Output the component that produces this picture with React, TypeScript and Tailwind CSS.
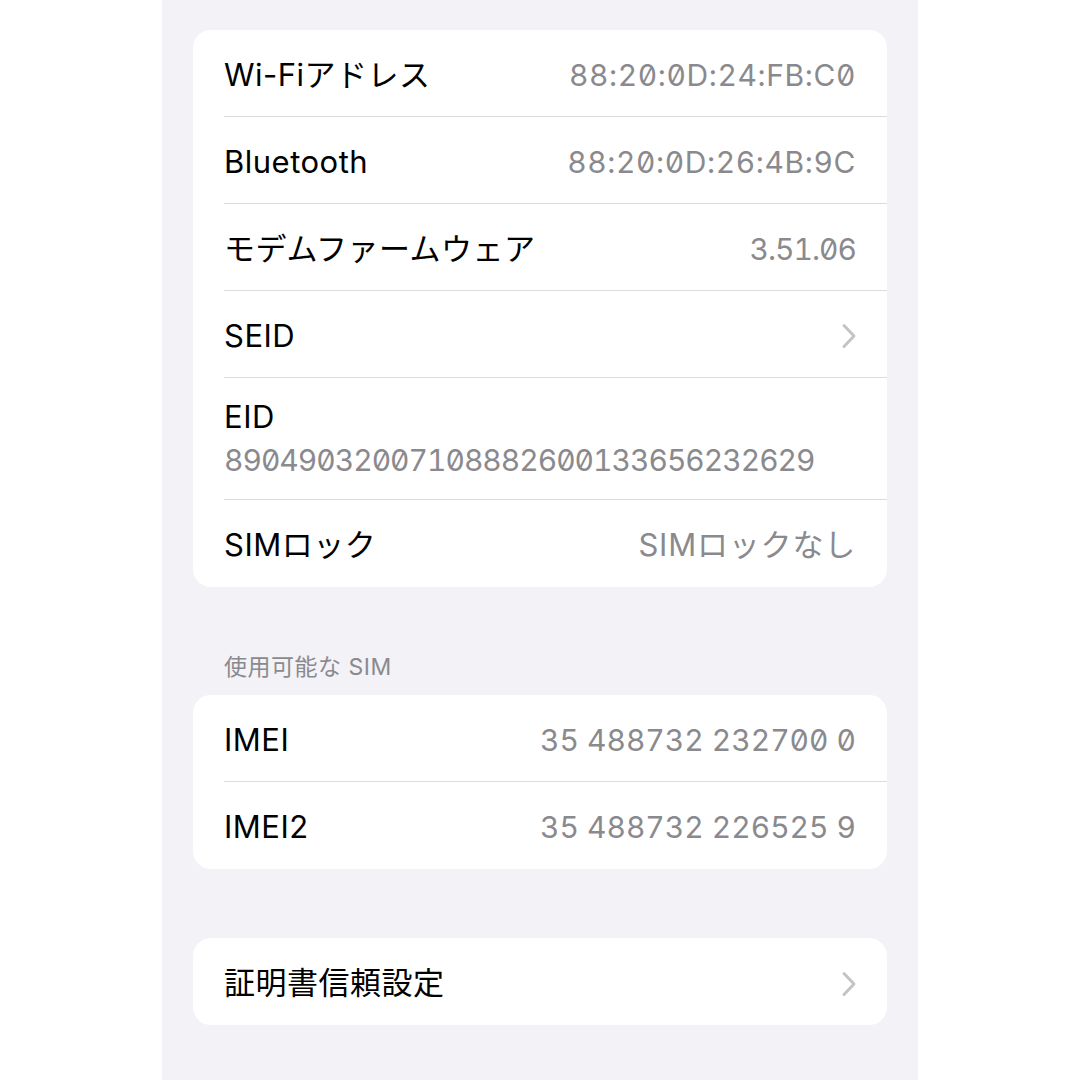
import type { ReactNode } from "react"

const LATIN = "font-['Inter','Noto_Sans_CJK_JP',sans-serif]"
const NUM = "[font-feature-settings:'tnum','zero']"

function Chevron() {
  return (
    <svg width="16" height="26" viewBox="0 0 16 26" className="flex-shrink-0 -mr-[1px]">
      <polyline points="3,2.5 13,13 3,23.5" fill="none" stroke="#c4c4c7" strokeWidth="3" strokeLinecap="round" strokeLinejoin="round" />
    </svg>
  )
}

function Row({ label, value, valueClass = "", chevron, last }: { label: string; value?: string; valueClass?: string; chevron?: boolean; last?: boolean }) {
  return (
    <div className={`ml-[31px] pr-[31px] pt-[4px] h-[87px] flex items-center justify-between ${last ? '' : 'border-b border-[#dcdcdf]'}`}>
      <span className="text-[31px] text-black tracking-[0.5px]">{label}</span>
      {value && <span className={`text-[30px] text-[#8a8a8e] ${NUM} ${valueClass}`}>{value}</span>}
      {chevron && <Chevron />}
    </div>
  )
}

function Card({ children, className = "" }: { children: ReactNode; className?: string }) {
  return <div className={`bg-white rounded-[18px] overflow-hidden ${className}`}>{children}</div>
}

export default function App() {
  return (
    <div className={`w-full min-h-[1080px] bg-white ${LATIN}`}>
      <div className="w-[756px] mx-auto min-h-[1080px] bg-[#f2f2f7] px-[31px] pt-[30px]">
        <Card>
          <Row label="Wi-Fiアドレス" value="88:20:0D:24:FB:C0" valueClass="tracking-[0.6px]" />
          <Row label="Bluetooth" value="88:20:0D:26:4B:9C" valueClass="tracking-[0.6px]" />
          <Row label="モデムファームウェア" value="3.51.06" valueClass="tracking-[-1px]" />
          <Row label="SEID" chevron />
          <div className="ml-[31px] pr-[31px] h-[122px] pt-[21px] border-b border-[#dcdcdf]">
            <div className="text-[31px] text-black leading-[36px] tracking-[0.5px]">EID</div>
            <div className={`mt-[7px] text-[30px] text-[#8a8a8e] leading-[36px] tracking-[-1px] ${NUM}`}>89049032007108882600133656232629</div>
          </div>
          <Row label="SIMロック" value="SIMロックなし" valueClass="text-[31px] tracking-[0.8px]" last />
        </Card>

        <div className="mt-[66px] mb-[14px] pl-[31px] text-[23px] leading-[28px] text-[#8a8a8e] tracking-[0.5px]">使用可能な SIM</div>

        <Card>
          <Row label="IMEI" value="35 488732 232700 0" />
          <Row label="IMEI2" value="35 488732 226525 9" last />
        </Card>

        <Card className="mt-[69px]">
          <Row label="証明書信頼設定" chevron last />
        </Card>
      </div>
    </div>
  )
}
